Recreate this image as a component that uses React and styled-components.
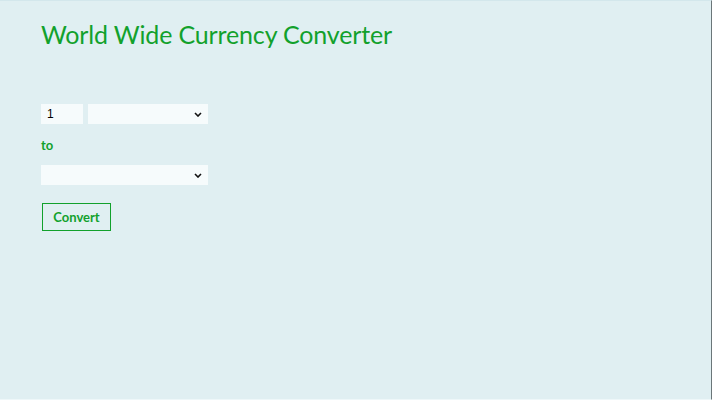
import React from "react";
import styled, { createGlobalStyle } from "styled-components";

const GlobalStyle = createGlobalStyle`
  html, body {
    margin: 0;
    padding: 0;
    background: #e0eff2;
  }
  * { box-sizing: border-box; }
`;

const Page = styled.div`
  width: 712px;
  height: 400px;
  background: #e0eff2;
  border-right: 1px solid #6b7679;
  border-top: 1px solid #d3e7ec;
  border-bottom: 1px solid #eef7f9;
  padding: 17px 0 0 41px;
  font-family: "Lato", "Open Sans", sans-serif;
  color: #12a12c;
`;

const Title = styled.h1`
  margin: 0;
  font-size: 25px;
  font-weight: 400;
  line-height: 32px;
  letter-spacing: -0.15px;
`;

const Form = styled.div`
  margin-top: 54px;
  display: flex;
  flex-direction: column;
  align-items: flex-start;
`;

const Row = styled.div`
  display: flex;
  align-items: flex-start;
  gap: 5px;
`;

const Amount = styled.input`
  display: block;
  width: 42px;
  height: 20px;
  margin: 0;
  border: none;
  outline: none;
  background: #f6fbfc;
  padding: 0 6px;
  font-family: "Liberation Sans", sans-serif;
  font-size: 12px;
  color: #000;
`;

const SelectWrap = styled.div`
  position: relative;
  width: ${({ $width }) => $width}px;
  height: 20px;
`;

const Select = styled.select`
  appearance: none;
  display: block;
  margin: 0;
  width: 100%;
  height: 100%;
  border: none;
  outline: none;
  background: #f6fbfc;
  font-family: "Open Sans", sans-serif;
  font-size: 11px;
`;

const Chevron = styled.svg`
  position: absolute;
  right: 6px;
  top: 8px;
  pointer-events: none;
`;

const Label = styled.div`
  margin: 13px 0 11px;
  font-size: 13px;
  font-weight: 700;
  line-height: 17px;
`;

const Button = styled.button`
  margin-top: 18px;
  margin-left: 1px;
  width: 69px;
  height: 28px;
  background: transparent;
  border: 1px solid #12a12c;
  color: #12a12c;
  font-family: "Lato", sans-serif;
  font-size: 13px;
  font-weight: 700;
  padding: 0;
  cursor: pointer;
`;

function Dropdown({ width }) {
  return (
    <SelectWrap $width={width}>
      <Select defaultValue="">
        <option value=""></option>
      </Select>
      <Chevron width="8" height="5" viewBox="0 0 8 5">
        <path d="M1 1 L4 4 L7 1" fill="none" stroke="#111" strokeWidth="1.6" />
      </Chevron>
    </SelectWrap>
  );
}

export default function App() {
  return (
    <>
      <GlobalStyle />
      <Page>
        <Title>World Wide Currency Converter</Title>
        <Form>
          <Row>
            <Amount defaultValue="1" />
            <Dropdown width={120} />
          </Row>
          <Label>to</Label>
          <Dropdown width={167} />
          <Button>Convert</Button>
        </Form>
      </Page>
    </>
  );
}
